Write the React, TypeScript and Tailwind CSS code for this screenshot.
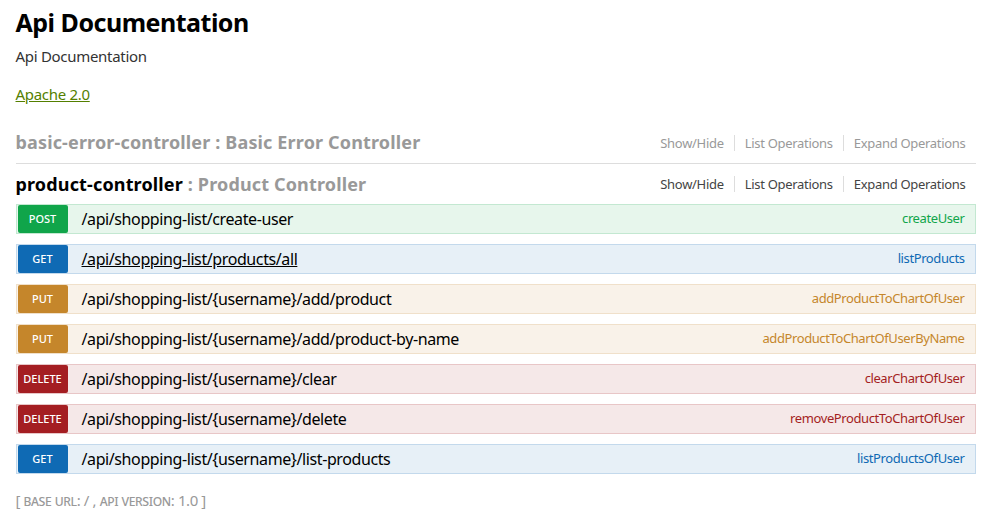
import React from "react";

type Method = "POST" | "GET" | "PUT" | "DELETE";

const styles: Record<Method, { row: string; badge: string; nick: string }> = {
  POST: {
    row: "bg-[#e7f6ec] border-[#c3e8d1]",
    badge: "bg-[#10a54a]",
    nick: "text-[#10a54a]",
  },
  GET: {
    row: "bg-[#e7f0f7] border-[#c3d9ec]",
    badge: "bg-[#0f6ab4]",
    nick: "text-[#0f6ab4]",
  },
  PUT: {
    row: "bg-[#f9f2e9] border-[#f0e0ca]",
    badge: "bg-[#c5862b]",
    nick: "text-[#c5862b]",
  },
  DELETE: {
    row: "bg-[#f5e8e8] border-[#e8c6c7]",
    badge: "bg-[#a41e22]",
    nick: "text-[#a41e22]",
  },
};

const operations: { method: Method; path: string; nick: string; hover?: boolean }[] = [
  { method: "POST", path: "/api/shopping-list/create-user", nick: "createUser" },
  { method: "GET", path: "/api/shopping-list/products/all", nick: "listProducts", hover: true },
  { method: "PUT", path: "/api/shopping-list/{username}/add/product", nick: "addProductToChartOfUser" },
  {
    method: "PUT",
    path: "/api/shopping-list/{username}/add/product-by-name",
    nick: "addProductToChartOfUserByName",
  },
  { method: "DELETE", path: "/api/shopping-list/{username}/clear", nick: "clearChartOfUser" },
  { method: "DELETE", path: "/api/shopping-list/{username}/delete", nick: "removeProductToChartOfUser" },
  { method: "GET", path: "/api/shopping-list/{username}/list-products", nick: "listProductsOfUser" },
];

function HeadingLinks({ dim }: { dim: boolean }) {
  const color = dim ? "text-[#999]" : "text-[#444]";
  const labels = ["Show/Hide", "List Operations", "Expand Operations"];
  return (
    <ul className={`flex items-center text-[13px] tracking-[-0.3px] ${color}`}>
      {labels.map((l, i) => (
        <li
          key={l}
          className={`px-[10px] leading-[16px] ${i > 0 ? "border-l border-[#ddd]" : ""}`}
        >
          {l}
        </li>
      ))}
    </ul>
  );
}

function OperationRow({ op }: { op: (typeof operations)[number] }) {
  const s = styles[op.method];
  return (
    <li className={`mb-[10px] flex h-[30px] items-center border ${s.row}`}>
      <span
        className={`ml-px flex h-[28px] w-[50px] items-center justify-center rounded-[2px] text-[11px] font-medium text-white ${s.badge}`}
      >
        {op.method}
      </span>
      <span
        className={`ml-[14px] text-[16px] tracking-[-0.4px] text-black ${op.hover ? "underline" : ""}`}
      >
        {op.path}
      </span>
      <span className={`ml-auto pr-[10px] text-[13px] tracking-[-0.4px] ${s.nick}`}>{op.nick}</span>
    </li>
  );
}

export default function App() {
  return (
    <div className="min-h-screen bg-white font-['Noto_Sans','Open_Sans',sans-serif]">
      <div className="mx-auto w-[960px] pt-[7px]">
        {/* Info */}
        <h1 className="text-[25px] font-bold leading-[30px] tracking-[-0.5px] text-black">
          Api Documentation
        </h1>
        <p className="mt-[9px] text-[15px] leading-[20px] tracking-[-0.3px] text-[#333]">
          Api Documentation
        </p>
        <a
          href="#"
          className="mt-[18px] block w-fit text-[15px] leading-[20px] tracking-[-0.3px] text-[#547f00] underline"
        >
          Apache 2.0
        </a>

        {/* Resources */}
        <div className="mt-[18px]">
          <div className="flex h-[42px] items-center justify-between border-b border-[#ddd]">
            <h2 className="text-[18px] font-bold tracking-[0.15px] text-[#999]">
              basic-error-controller : Basic Error Controller
            </h2>
            <HeadingLinks dim />
          </div>
          <div className="flex h-[40px] items-center justify-between">
            <h2 className="text-[18px] font-bold tracking-[0.15px] text-[#999]">
              <span className="text-black">product-controller</span> : Product Controller
            </h2>
            <HeadingLinks dim={false} />
          </div>
          <ul>
            {operations.map((op) => (
              <OperationRow key={op.method + op.path} op={op} />
            ))}
          </ul>
        </div>

        {/* Footer */}
        <div className="mt-[16px] text-[15px] leading-[20px] tracking-[-0.4px] text-[#999]">
          [ <span className="[font-variant:small-caps]">base url</span>: / ,{" "}
          <span className="[font-variant:small-caps]">api version</span>: 1.0 ]
        </div>
      </div>
    </div>
  );
}
